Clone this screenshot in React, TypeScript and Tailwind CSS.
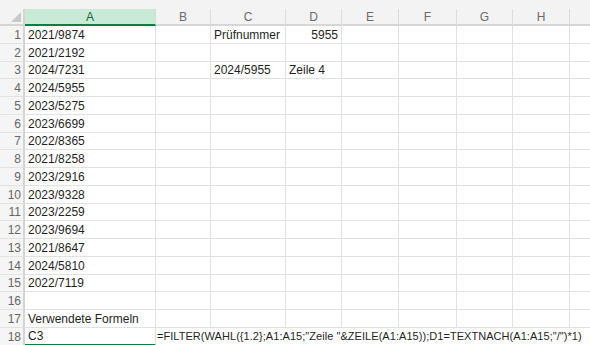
const cols = [
  { key: "A", w: "w-[131px]" },
  { key: "B", w: "w-[55px]" },
  { key: "C", w: "w-[75px]" },
  { key: "D", w: "w-[56px]" },
  { key: "E", w: "w-[57px]" },
  { key: "F", w: "w-[58px]" },
  { key: "G", w: "w-[56px]" },
  { key: "H", w: "w-[57px]" },
];

const heights = [
  "h-[18px]", "h-[18px]", "h-[17px]", "h-[18px]", "h-[18px]", "h-[18px]",
  "h-[17px]", "h-[18px]", "h-[18px]", "h-[18px]", "h-[17px]", "h-[18px]",
  "h-[18px]", "h-[18px]", "h-[17px]", "h-[18px]", "h-[18px]", "h-[18px]",
];

const colA = [
  "2021/9874", "2021/2192", "2024/7231", "2024/5955", "2023/5275", "2023/6699",
  "2022/8365", "2021/8258", "2023/2916", "2023/9328", "2023/2259", "2023/9694",
  "2021/8647", "2024/5810", "2022/7119", "", "Verwendete Formeln", "C3",
];

const extra: Record<string, { text: string; right?: boolean }> = {
  "1C": { text: "Prüfnummer" },
  "1D": { text: "5955", right: true },
  "3C": { text: "2024/5955" },
  "3D": { text: "Zeile 4" },
};

const formula = '=FILTER(WAHL({1.2};A1:A15;"Zeile "&ZEILE(A1:A15));D1=TEXTNACH(A1:A15;"/")*1)';

function RowHeader({ n, h }: { n: number; h: string }) {
  return (
    <div
      className={`${h} w-[25px] shrink-0 bg-[#f5f5f5] border-r-2 border-b border-r-[#d4d4d4] border-b-[#e3e3e3] flex items-center justify-end pr-[2px] text-[#666666]`}
    >
      {n}
    </div>
  );
}

export default function App() {
  return (
    <div
      className="w-[590px] h-[345px] overflow-hidden bg-white text-[12px] leading-none text-[#1f1f1f]"
      style={{ fontFamily: '"Liberation Sans", Arial, sans-serif' }}
    >
      <div className="h-[9px] bg-[#f3f3f3]" />
      <div className="flex h-[17px] bg-[#f3f3f3]">
        <div className="relative w-[25px] shrink-0 border-r-2 border-b-2 border-[#d4d4d4]">
          <svg className="absolute right-[2px] bottom-[2px]" width="10" height="10" viewBox="0 0 10 10">
            <polygon points="10,0 10,10 0,10" fill="#c9c9c9" />
          </svg>
        </div>
        {cols.map((c) =>
          c.key === "A" ? (
            <div
              key={c.key}
              className={`${c.w} shrink-0 bg-[#caead8] border-r border-r-[#d9d9d9] border-b-2 border-b-[#107c41] flex items-center justify-center text-[#0f6b37]`}
            >
              {c.key}
            </div>
          ) : (
            <div
              key={c.key}
              className={`${c.w} shrink-0 border-r border-r-[#dcdcdc] border-b-2 border-b-[#d6d6d6] flex items-center justify-center text-[#6b6b6b]`}
            >
              {c.key}
            </div>
          )
        )}
        <div className="flex-1 border-b-2 border-b-[#d6d6d6]" />
      </div>

      {heights.map((h, i) => {
        const n = i + 1;
        if (n === 18) {
          return (
            <div key={n} className="flex">
              <RowHeader n={n} h={h} />
              <div className={`${h} w-[131px] shrink-0 border-r border-r-[#e1e1e1] border-b-2 border-b-[#107c41] flex items-center pl-[3px]`}>
                {colA[i]}
              </div>
              <div className={`${h} flex-1 min-w-0 border-b border-[#e1e1e1] flex items-center pl-[1px] whitespace-nowrap text-[11px] tracking-[0.05px]`}>
                {formula}
              </div>
            </div>
          );
        }
        return (
          <div key={n} className="flex">
            <RowHeader n={n} h={h} />
            {cols.map((c) => {
              const v = c.key === "A" ? { text: colA[i] } : extra[`${n}${c.key}`];
              return (
                <div
                  key={c.key}
                  className={`${h} ${c.w} shrink-0 border-r border-b border-[#e1e1e1] flex items-center px-[3px] whitespace-nowrap ${v?.right ? "justify-end" : ""}`}
                >
                  {v?.text}
                </div>
              );
            })}
            <div className={`${h} flex-1 border-b border-[#e1e1e1]`} />
          </div>
        );
      })}
    </div>
  );
}
